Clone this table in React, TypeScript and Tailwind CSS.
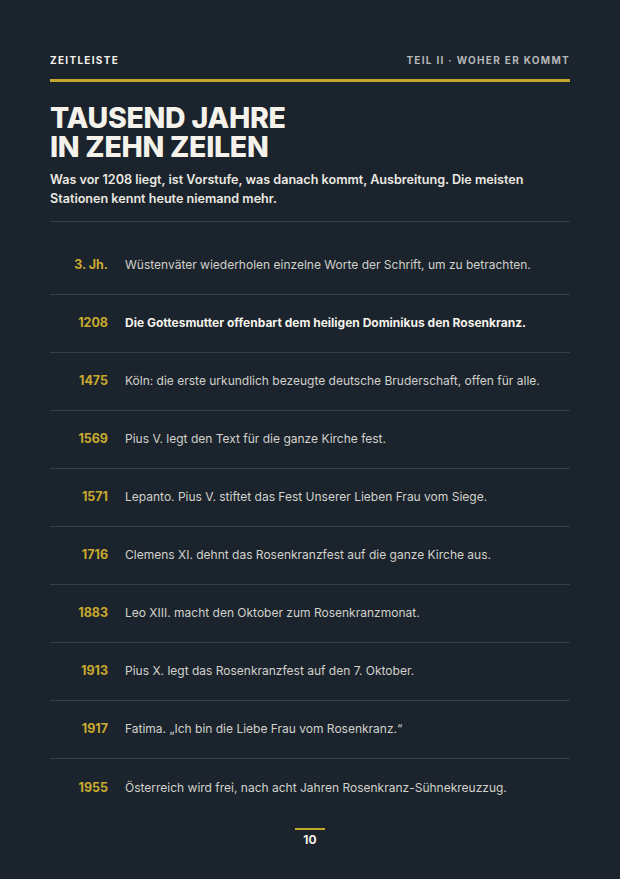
const events: { year: string; text: string; strong?: boolean }[] = [
  { year: '3. Jh.', text: 'Wüstenväter wiederholen einzelne Worte der Schrift, um zu betrachten.' },
  { year: '1208', text: 'Die Gottesmutter offenbart dem heiligen Dominikus den Rosenkranz.', strong: true },
  { year: '1475', text: 'Köln: die erste urkundlich bezeugte deutsche Bruderschaft, offen für alle.' },
  { year: '1569', text: 'Pius V. legt den Text für die ganze Kirche fest.' },
  { year: '1571', text: 'Lepanto. Pius V. stiftet das Fest Unserer Lieben Frau vom Siege.' },
  { year: '1716', text: 'Clemens XI. dehnt das Rosenkranzfest auf die ganze Kirche aus.' },
  { year: '1883', text: 'Leo XIII. macht den Oktober zum Rosenkranzmonat.' },
  { year: '1913', text: 'Pius X. legt das Rosenkranzfest auf den 7. Oktober.' },
  { year: '1917', text: 'Fatima. „Ich bin die Liebe Frau vom Rosenkranz.“' },
  { year: '1955', text: 'Österreich wird frei, nach acht Jahren Rosenkranz-Sühnekreuzzug.' },
];

export default function App() {
  return (
    <div className="min-h-[879px] w-[620px] bg-[#1b242d] px-[50px] pt-[53px] font-['Inter',sans-serif] text-[#f4f2ea]">
      {/* Running head */}
      <header className="flex items-center justify-between border-b-[3px] border-[#c4a62c] pb-[11px] text-[10px] font-bold uppercase tracking-[0.13em]">
        <span className="text-[#f4f2ea]">Zeitleiste</span>
        <span className="text-[#b4b7b8]">Teil II · Woher er kommt</span>
      </header>

      {/* Title */}
      <h1 className="mt-[21px] text-[28.5px] font-extrabold uppercase leading-[29px] tracking-[-0.01em]">
        Tausend Jahre
        <br />
        in Zehn Zeilen
      </h1>
      <p className="mt-[9px] text-[12.6px] font-semibold leading-[19px] text-[#ebe9e1]">
        Was vor 1208 liegt, ist Vorstufe, was danach kommt, Ausbreitung. Die meisten Stationen kennt heute niemand mehr.
      </p>

      {/* Timeline */}
      <ul className="mt-[13px] border-t border-[#363f48] pt-[15px]" role="list">
        {events.map((e, idx) => (
          <li
            key={e.year}
            className={`flex h-[58px] items-center ${idx < events.length - 1 ? 'border-b border-[#363f48]' : ''}`}
          >
            <div className="flex items-baseline gap-[17px]">
              <span className="w-[58px] shrink-0 text-right text-[12.5px] font-bold text-[#c9aa2e]">{e.year}</span>
              <span
                className={
                  e.strong
                    ? 'text-[12px] font-bold text-[#f4f2ea]'
                    : 'text-[12px] text-[#d2d1cb]'
                }
              >
                {e.text}
              </span>
            </div>
          </li>
        ))}
      </ul>

      {/* Folio */}
      <footer className="mt-[11px] flex flex-col items-center">
        <div className="h-[2px] w-[30px] bg-[#c4a62c]" />
        <span className="mt-[1px] text-[12px] font-bold text-[#f4f2ea]">10</span>
      </footer>
    </div>
  );
}
